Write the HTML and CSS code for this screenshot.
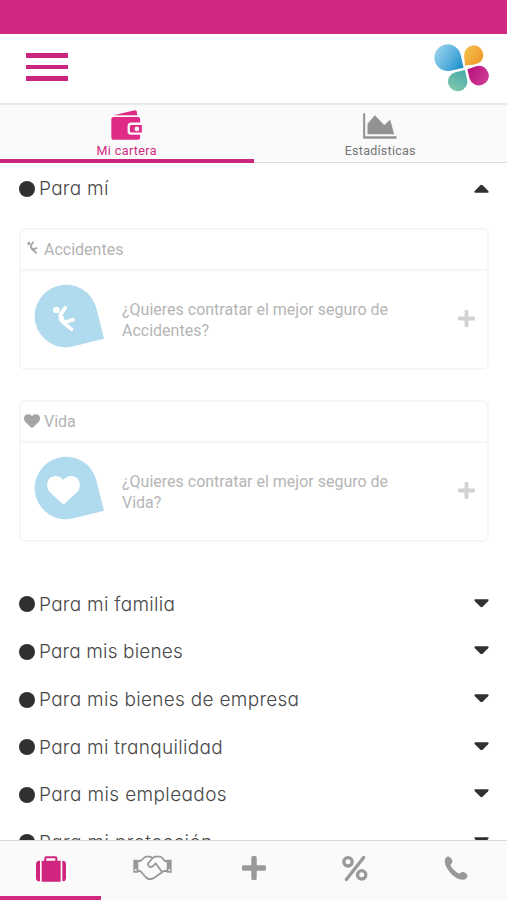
FILE: index.html
```html
<!DOCTYPE html>
<html lang="es">
<head>
<meta charset="utf-8">
<title>Mi cartera</title>
<link rel="stylesheet" href="styles.css">
</head>
<body>
<svg class="defs" aria-hidden="true">
  <defs>
    <linearGradient id="blue" x1="0" y1="0" x2="1" y2="1"><stop offset="0" stop-color="#a5d9f2"/><stop offset=".5" stop-color="#64b7e0"/><stop offset="1" stop-color="#168dca"/></linearGradient>
    <linearGradient id="orange" x1="0" y1="1" x2="1" y2="0"><stop offset="0" stop-color="#f5c552"/><stop offset="1" stop-color="#ee9322"/></linearGradient>
    <linearGradient id="pink" x1="0" y1="0" x2="1" y2="1"><stop offset="0" stop-color="#d0449a"/><stop offset="1" stop-color="#b80d79"/></linearGradient>
    <linearGradient id="teal" x1="0" y1="0" x2="1" y2="1"><stop offset="0" stop-color="#8acbb0"/><stop offset="1" stop-color="#45aaa5"/></linearGradient>
    <symbol id="fall" viewBox="0 0 66 82">
      <circle cx="10" cy="15" r="10"/>
      <path d="M37 8L22 30Q20 44 33 55L56 74M35 53L60 45" fill="none" stroke="currentColor" stroke-width="11" stroke-linecap="round" stroke-linejoin="round"/>
      <path d="M18 28L34 36L31 42L46 50L36 60L22 48Z"/>
    </symbol>
    <symbol id="heart" viewBox="0 0 100 86"><path d="M50 86Q47 86 44 83L7 48C-6 34-1 4 20 1C34-2 44 5 50 12C56 5 66-2 80 1C101 4 106 34 93 48L56 83Q53 86 50 86Z"/></symbol>
    <symbol id="plus" viewBox="0 0 24 24"><path d="M9.300 1.500Q9.300 0 10.800 0H13.200Q14.700 0 14.700 1.500V9.300H22.500Q24 9.300 24 10.800V13.200Q24 14.700 22.500 14.700H14.700V22.500Q14.700 24 13.200 24H10.800Q9.300 24 9.300 22.500V14.700H1.500Q0 14.700 0 13.200V10.800Q0 9.300 1.500 9.300H9.300Z"/></symbol>
    <symbol id="drop" viewBox="-32 -32 71 64"><path transform="rotate(-14.2)" d="M31.300 31.300H0A31.300 31.300 0 1 1 31.300 0Z"/></symbol>
    <symbol id="caret" viewBox="0 0 16 9"><path d="M1.500 0H14.500Q16.500 .3 15 2L9.500 7.800Q8 9.300 6.500 7.800L1 2Q-.5 .3 1.500 0Z"/></symbol>
  </defs>
</svg>
<div class="app">
  <div class="status"></div>
  <header class="header">
    <div class="burger"><i></i><i></i><i></i></div>
    <svg class="logo" viewBox="43 43 168 144">
      <g transform="translate(84 84) rotate(-12.5)"><path fill="url(#blue)" d="M40 40H0A40 40 0 1 1 40 0Z"/></g>
      <g transform="translate(162 76)"><path fill="url(#orange)" transform="rotate(84)" d="M29 29H0A29 29 0 1 1 29 0Z"/></g>
      <g transform="translate(178 138)"><path fill="url(#pink)" transform="rotate(163.6)" d="M28 28L0 29.500A29.500 29.500 0 1 1 29.500 0Z"/></g>
      <g transform="translate(114 156)"><path fill="url(#teal)" transform="rotate(-103)" d="M29 29H0A29 29 0 1 1 29 0Z"/></g>
    </svg>
  </header>
  <nav class="tabs">
    <a class="tab active">
      <svg class="wallet" viewBox="335 270 95 92"><path d="M343 286L407 271Q412 270 413 276L414 286Z"/><path d="M342 291H416Q423 291 423 298V308H396Q385 308 385 319V335Q385 345 396 345H423V353Q423 360 416 360H343Q336 360 336 352V297Q336 291 342 291Z"/><path fill-rule="evenodd" d="M397 315H428V338H397Q392 338 392 333V320Q392 315 397 315ZM413 320A7 7 0 1 0 413 334A7 7 0 1 0 413 320Z"/></svg>
      <span class="label wide">Mi cartera</span>
    </a>
    <a class="tab">
      <svg class="chart" viewBox="329 38 101 78"><path d="M329 39H335V108H429V115H329Z"/><path d="M342 102V70L364 45L392 74L410 58L422 102Z"/></svg>
      <span class="label">Estadísticas</span>
    </a>
  </nav>
  <main class="content">
    <div class="row first"><i class="dot"></i><span class="title t1">Para mí</span><svg class="caret up"><use href="#caret"/></svg></div>
    <section class="card">
      <div class="card-head"><svg class="mini fall"><use href="#fall"/></svg><span>Accidentes</span></div>
      <div class="card-body">
        <div class="badge"><svg class="drop"><use href="#drop"/></svg><svg class="glyph falling"><use href="#fall"/></svg></div>
        <p>¿Quieres contratar el mejor seguro de Accidentes?</p>
        <svg class="add"><use href="#plus"/></svg>
      </div>
    </section>
    <section class="card">
      <div class="card-head"><svg class="mini heart"><use href="#heart"/></svg><span>Vida</span></div>
      <div class="card-body">
        <div class="badge"><svg class="drop"><use href="#drop"/></svg><svg class="glyph love"><use href="#heart"/></svg></div>
        <p>¿Quieres contratar el mejor seguro de Vida?</p>
        <svg class="add"><use href="#plus"/></svg>
      </div>
    </section>
    <div class="list">
      <div class="row"><i class="dot"></i><span class="title t2">Para mi familia</span><svg class="caret"><use href="#caret"/></svg></div>
      <div class="row"><i class="dot"></i><span class="title t3">Para mis bienes</span><svg class="caret"><use href="#caret"/></svg></div>
      <div class="row"><i class="dot"></i><span class="title t4">Para mis bienes de empresa</span><svg class="caret"><use href="#caret"/></svg></div>
      <div class="row"><i class="dot"></i><span class="title t5">Para mi tranquilidad</span><svg class="caret"><use href="#caret"/></svg></div>
      <div class="row"><i class="dot"></i><span class="title t6">Para mis empleados</span><svg class="caret"><use href="#caret"/></svg></div>
      <div class="row"><i class="dot"></i><span class="title t7">Para mi protección</span><svg class="caret"><use href="#caret"/></svg></div>
    </div>
  </main>
  <nav class="bottom">
    <a class="item active"><svg class="case" viewBox="110 406 90 78"><path d="M122 420V482H120Q110 482 110 471V431Q110 420 120 420ZM189 420H190Q200 420 200 431V471Q200 482 190 482H189Z"/><path fill-rule="evenodd" d="M127 420H135V412Q135 407 140 407H169Q174 407 174 412V420H184V483H127ZM141 413V420H168V413Z"/></svg></a>
    <a class="item"><svg class="shake" viewBox="400 411 117 76"><path fill-rule="evenodd" d="M401 424H416V463H401ZM408 452A3 3 0 1 0 408 458A3 3 0 1 0 408 452ZM501 424H516V463H501ZM509 452A3 3 0 1 0 509 458A3 3 0 1 0 509 452Z"/><path fill="none" stroke="currentColor" stroke-width="5.500" stroke-linejoin="round" stroke-linecap="round" d="M416 428H422L434 418Q437 415 442 415H451L459 419L466 415H480Q485 415 488 419L495 428H501M416 458H422L438 476Q451 489 466 477L487 462Q490 458 494 458H501M459 419L446 434Q443 441 449 445Q456 448 461 442L468 435L487 461"/></svg></a>
    <a class="item"><svg class="big-plus"><use href="#plus"/></svg></a>
    <a class="item"><svg class="percent" viewBox="264 225 78 80"><g fill="none" stroke="currentColor"><circle cx="282" cy="245" r="12.500" stroke-width="10"/><circle cx="323" cy="284" r="12.500" stroke-width="10"/><path d="M329 232L277 298" stroke-width="10" stroke-linecap="round"/></g></svg></a>
    <a class="item"><svg class="phone" viewBox="570 226 72 72"><path d="M577 230Q581 226 587 229Q593 233 595 240Q597 245 592 249Q588 252 591 257Q599 270 611 277Q616 280 620 276Q625 271 631 275Q638 279 641 284Q641 290 636 294Q628 299 617 296Q594 288 580 264Q572 251 572 240Q573 234 577 230Z"/></svg></a>
  </nav>
</div>
</body>
</html>
```
FILE: styles.css
```css
* { box-sizing: border-box; }
body { margin: 0; background: #fff; font-family: Roboto, sans-serif; }
svg { display: block; fill: currentColor; flex: none; }
.defs { position: absolute; width: 0; height: 0; }
.app { height: 900px; display: flex; flex-direction: column; overflow: hidden; }
.status { height: 34px; background: #d12881; flex: none; }
.header { height: 71px; flex: none; display: flex; justify-content: space-between; padding: 10px 17px 0 26px; border-bottom: 2px solid #e9e9e9; }
.burger { display: flex; flex-direction: column; gap: 7px; padding-top: 9px; width: 42px; }
.burger i { height: 4.6px; background: #ca247e; }
.logo { width: 56px; height: 48px; }
.tabs { height: 58px; flex: none; display: flex; background: #fafafa; border-bottom: 1px solid #dcdcdc; }
.tab { flex: 1; height: 58px; display: flex; flex-direction: column; align-items: center; color: #929292; padding-top: 5px; }
.tab.active { color: #df2b86; border-bottom: 4px solid #cc267f; }
.wallet { width: 31.500px; height: 30.500px; }
.chart { width: 34px; height: 26px; margin: 3px 0 1.500px; }
.label { font-size: 12.500px; line-height: 18px; color: #747474; letter-spacing: .25px; margin-top: 1px; }
.active .label { color: #d12881; }
.label.wide { letter-spacing: .4px; }
.content { flex: 1; min-height: 0; overflow: hidden; padding: 2px 18px 0 19px; }
.row { height: 47.600px; display: flex; align-items: center; color: #303030; }
.dot { width: 16px; height: 16px; border-radius: 50%; background: #303030; margin-right: 4px; }
.title { flex: 1; font-family: Inter, sans-serif; font-weight: 300; font-size: 19px; color: #484848; font-feature-settings: "cv11"; white-space: nowrap; letter-spacing: .3px; }
.t3 { letter-spacing: .15px; }
.t6, .t7 { letter-spacing: .38px; }
.caret { width: 15px; height: 9px; margin: 0; }
.caret.up { transform: rotate(180deg); }
.list .caret { margin-top: -2px; }
.card { height: 142px; border: 2px solid #f6f6f6; border-radius: 6px; color: #b3b3b3; }
.first + .card { margin-top: 15px; }
.card + .card { margin-top: 30px; }
.card-head { height: 41px; border-bottom: 2px solid #f5f5f5; display: flex; align-items: center; font-size: 16px; letter-spacing: 0; }
.mini { color: #a5a5a5; }
.mini.fall { width: 11px; height: 13px; margin: -4px 6px 0 6px; }
.mini.heart { width: 16px; height: 14px; margin: 0 4px 0 3px; }
.card-body { height: 97px; display: flex; align-items: center; padding: 0 12px 0 12px; }
.badge { position: relative; width: 71px; height: 64px; margin: -7px 0 0 1px; color: #b0daee; }
.drop { width: 71px; height: 64px; }
.glyph { position: absolute; color: #fff; }
.falling { width: 22px; height: 27px; left: 19px; top: 21px; }
.love { width: 33px; height: 28px; left: 13px; top: 20px; }
.card-body p { flex: 1; margin: 1px 0 0 17px; padding-right: 40px; font-size: 16px; line-height: 21px; letter-spacing: 0; color: #b5b5b5; }
.add { width: 17px; height: 17px; color: #d2d2d2; margin: -1px 0 0; }
.list { margin-top: 39px; }
.bottom { height: 60px; flex: none; display: flex; background: #fafafa; border-top: 1px solid #d8d8d8; }
.item { flex: 1; display: flex; justify-content: center; align-items: center; color: #999; padding-bottom: 5px; }
.item.active { color: #cf2480; border-bottom: 4px solid #d12881; padding-bottom: 0; }
.case { width: 30px; height: 26px; }
.shake { width: 39px; height: 26px; }
.big-plus { width: 24px; height: 24px; }
.percent { width: 26px; height: 27px; }
.phone { width: 24px; height: 24px; }
```
